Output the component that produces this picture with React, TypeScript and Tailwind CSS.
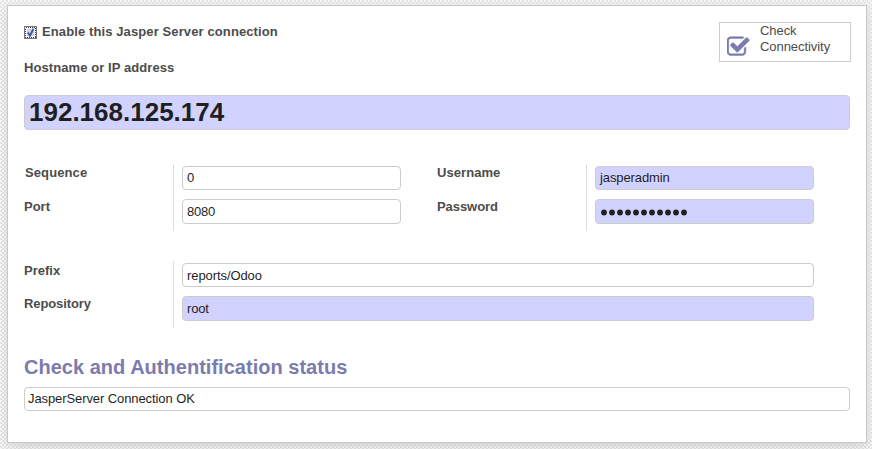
import React from "react";

const fieldBase =
  "box-border rounded-[4px] border border-[#ccc] text-[#1f1f1f] outline-none whitespace-nowrap";

function Label({ children, className = "" }: { children: React.ReactNode; className?: string }) {
  return (
    <span className={`block whitespace-nowrap text-[13px] font-bold leading-[16px] text-[#4c4c4c] ${className}`}>
      {children}
    </span>
  );
}

function Value({ children, className = "" }: { children: React.ReactNode; className?: string }) {
  return <div className={`${fieldBase} ${className}`}>{children}</div>;
}

export default function App() {
  return (
    <div className="h-[449px] w-[872px] overflow-hidden bg-[#f6f6f6] bg-[conic-gradient(#e6e6e6_25%,#f8f8f8_0_50%,#e6e6e6_0_75%,#f8f8f8_0)] bg-[length:4px_4px] pl-[7px] pt-[5px] font-['Liberation_Sans',Arial,sans-serif]">
      <main className="box-border h-[438px] w-[860px] border border-[#c8c8d3] bg-white pl-4 shadow-[0_4px_12px_rgba(0,0,0,0.12)]">
        <header className="flex h-[89px] w-[827px] justify-between">
          <div className="pt-[18px]">
            <div className="flex">
              <svg className="mt-[2px] h-[13px] w-[13px]" viewBox="0 0 13 13" shapeRendering="crispEdges">
                <rect width="13" height="13" fill="#77797d" />
                <rect x="1" y="1" width="11" height="11" fill="#f4f4f4" />
                <rect x="1.5" y="1.5" width="10" height="10" fill="none" stroke="#3c3c3c" strokeDasharray="1 1" />
                <rect x="3" y="3" width="7" height="7" fill="#cdd3e0" />
                <path d="M3.8 6.5l2.2 3.2L9.5 2.8" fill="none" stroke="#4158a0" strokeWidth="1.9" shapeRendering="auto" />
              </svg>
              <Label className="ml-[5px] tracking-[0.11px]">Enable this Jasper Server connection</Label>
            </div>
            <Label className="mt-5 tracking-[0.08px]">Hostname or IP address</Label>
          </div>
          <button className="mt-4 flex h-10 w-[132px] border border-[#ccc] pl-[7px] text-left text-[13px] leading-4 tracking-[-0.06px] text-[#4c4c4c]">
            <svg className="mt-[12px] h-6 w-6" viewBox="0 0 1792 1792" fill="#7c7bad" stroke="#7c7bad" strokeWidth="40">
              <path d="M1408 930v318q0 119-84.5 203.5t-203.5 84.5h-832q-119 0-203.5-84.5t-84.5-203.5v-832q0-119 84.5-203.5t203.5-84.5h832q63 0 117 25 15 7 18 23 3 17-9 29l-49 49q-10 10-23 10-3 0-9-2-23-6-45-6h-832q-66 0-113 47t-47 113v832q0 66 47 113t113 47h832q66 0 113-47t47-113v-254q0-13 9-22l64-64q10-10 23-10 6 0 12 3 20 8 20 29zm231-489l-814 814q-24 24-57 24t-57-24l-430-430q-24-24-24-57t24-57l110-110q24-24 57-24t57 24l263 263 647-647q24-24 57-24t57 24l110 110q24 24 24 57t-24 57z" />
            </svg>
            <span className="ml-[9px]">
              Check
              <br />
              Connectivity
            </span>
          </button>
        </header>

        <Value className="h-[35px] w-[826px] bg-[#d2d2ff] pl-1 text-[26px] font-bold leading-[33px]">192.168.125.174</Value>

        <section className="mt-[34px] flex h-[67px] text-[13px]">
          <div className="w-[149px]">
            <Label className="mt-[1px] pl-px tracking-[0.1px]">Sequence</Label>
            <Label className="mt-[18px]">Port</Label>
          </div>
          <div className="w-[264px] border-l border-[#ddd] pl-2 pt-0.5">
            <Value className="h-6 w-[219px] pl-1 leading-[22px]">0</Value>
            <Value className="mt-[9px] h-[25px] w-[219px] pl-1 leading-[23px] tracking-[-0.25px]">8080</Value>
          </div>
          <div className="w-[149px]">
            <Label className="mt-[1px] tracking-[0.06px]">Username</Label>
            <Label className="mt-[18px] tracking-[-0.06px]">Password</Label>
          </div>
          <div className="border-l border-[#ddd] pl-2 pt-0.5">
            <Value className="h-6 w-[219px] bg-[#d2d2ff] pl-1 leading-[22px] tracking-[-0.1px]">jasperadmin</Value>
            <Value className="mt-[9px] flex h-[25px] w-[219px] items-center bg-[#d2d2ff] pl-1">
              <svg className="h-2 w-[90px]" viewBox="0 0 90 8" fill="#1f1f1f">
                {Array.from({ length: 11 }, (_, i) => (
                  <circle key={i} cx={4 + i * 8} cy="4.5" r="2.9" />
                ))}
              </svg>
            </Value>
          </div>
        </section>

        <section className="mt-[30px] flex h-[67px] text-[13px]">
          <div className="w-[149px]">
            <Label className="mt-[2px]">Prefix</Label>
            <Label className="mt-[17px] tracking-[-0.1px]">Repository</Label>
          </div>
          <div className="border-l border-[#ddd] pl-2 pt-0.5">
            <Value className="h-6 w-[632px] pl-1 leading-[24px] tracking-[-0.08px]">reports/Odoo</Value>
            <Value className="mt-[9px] h-[25px] w-[632px] bg-[#d2d2ff] pl-1 leading-[23px] tracking-[-0.15px]">root</Value>
          </div>
        </section>

        <h2 className="mt-[27px] h-8 text-[20px] font-bold leading-6 tracking-[0.02px] text-[#7c7bad]">
          Check and Authentification status
        </h2>
        <Value className="h-6 w-[826px] pl-[3px] text-[13px] leading-[22px] tracking-[-0.09px]">JasperServer Connection OK</Value>
      </main>
    </div>
  );
}
